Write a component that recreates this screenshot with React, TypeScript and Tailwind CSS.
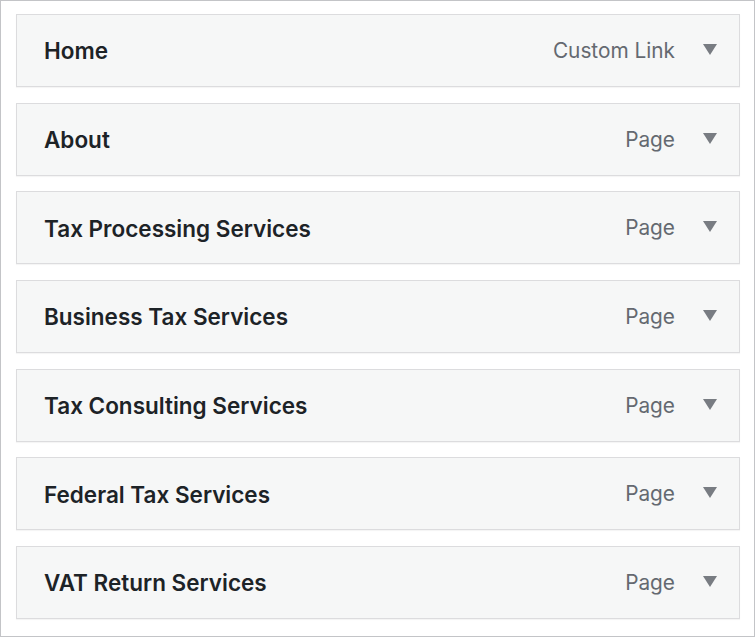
const items = [
  { title: 'Home', type: 'Custom Link' },
  { title: 'About', type: 'Page' },
  { title: 'Tax Processing Services', type: 'Page' },
  { title: 'Business Tax Services', type: 'Page' },
  { title: 'Tax Consulting Services', type: 'Page' },
  { title: 'Federal Tax Services', type: 'Page' },
  { title: 'VAT Return Services', type: 'Page' },
];

export default function App() {
  return (
    <div className="w-[756px] h-[638px] bg-white" style={{ fontFamily: 'Inter, "Noto Sans", sans-serif' }}>
      <div className="w-[755px] h-[637px] border border-[#c3c4c7] pt-[13px] pl-[15px]">
        <div className="flex flex-col gap-[15.67px] w-[724px]">
          {items.map((item) => (
            <MenuItem key={item.title} title={item.title} type={item.type} />
          ))}
        </div>
      </div>
    </div>
  );
}

function MenuItem({ title, type }: { title: string; type: string }) {
  return (
    <div className="h-[73px] flex items-center justify-between bg-[#f6f7f7] border border-[#dcdcde] shadow-[0_1px_1px_rgba(0,0,0,0.04)] pl-[27px] pr-[22px]">
      <span className="text-[22.5px] font-semibold text-[#1d2327] leading-none mt-[2px]">{title}</span>
      <div className="flex items-center gap-[28px]">
        <span className="text-[20.8px] text-[#646970] leading-none mt-[2px]">{type}</span>
        <svg width="14" height="11" viewBox="0 0 14 11" className="mt-[-2px]">
          <path d="M0 0 H14 L7 11 Z" fill="#787c82" />
        </svg>
      </div>
    </div>
  );
}
